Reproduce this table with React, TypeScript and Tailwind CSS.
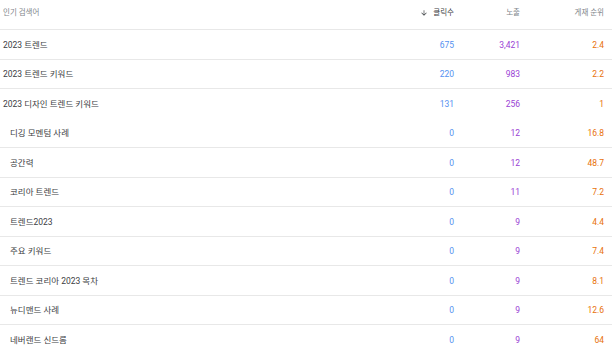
const rows = [
  { name: "2023 트렌드", clicks: "675", imp: "3,421", pos: "2.4", child: false, line: true },
  { name: "2023 트렌드 키워드", clicks: "220", imp: "983", pos: "2.2", child: false, line: true },
  { name: "2023 디자인 트렌드 키워드", clicks: "131", imp: "256", pos: "1", child: false, line: false },
  { name: "디깅 모멘텀 사례", clicks: "0", imp: "12", pos: "16.8", child: true, line: true },
  { name: "공간력", clicks: "0", imp: "12", pos: "48.7", child: true, line: true },
  { name: "코리아 트렌드", clicks: "0", imp: "11", pos: "7.2", child: true, line: true },
  { name: "트렌드2023", clicks: "0", imp: "9", pos: "4.4", child: true, line: true },
  { name: "주요 키워드", clicks: "0", imp: "9", pos: "7.4", child: true, line: true },
  { name: "트렌드 코리아 2023 목차", clicks: "0", imp: "9", pos: "8.1", child: true, line: true },
  { name: "뉴디맨드 사례", clicks: "0", imp: "9", pos: "12.6", child: true, line: true },
  { name: "네버랜드 신드롬", clicks: "0", imp: "9", pos: "64", child: true, line: true },
];

export default function App() {
  return (
    <div className="w-[612px] h-[349px] overflow-hidden bg-white font-['Roboto','Noto_Sans_CJK_KR',sans-serif]">
      <div className="flex h-[30px] items-start pt-[7px] border-b border-[#e8e8e8] text-[7.5px] text-[#80868b]">
        <div className="flex-1 pl-[3px]">인기 검색어</div>
        <div className="w-[60px] flex items-center justify-end gap-[5px] text-[#3c4043]">
          <svg width="8" height="8" viewBox="0 0 24 24" fill="currentColor">
            <path d="M20 12l-1.41-1.41L13 16.17V4h-2v12.17l-5.58-5.59L4 12l8 8 8-8z" />
          </svg>
          <span>클릭수</span>
        </div>
        <div className="w-[66px] text-right">노출</div>
        <div className="w-[84px] text-right">게재 순위</div>
        <div className="w-[8px]" />
      </div>
      {rows.map((r) => (
        <div
          key={r.name}
          className={`flex h-[29.5px] items-center pt-[2px] text-[8.5px] ${r.line ? "border-b border-[#e8e8e8]" : ""}`}
        >
          <div className={`flex-1 text-[#3c4043] ${r.child ? "pl-[10px]" : "pl-[3px]"}`}>{r.name}</div>
          <div className="w-[60px] text-right text-[#5591f0]">{r.clicks}</div>
          <div className="w-[66px] text-right text-[#9a3fd5]">{r.imp}</div>
          <div className="w-[84px] text-right text-[#e8710a]">{r.pos}</div>
          <div className="w-[8px]" />
        </div>
      ))}
    </div>
  );
}
